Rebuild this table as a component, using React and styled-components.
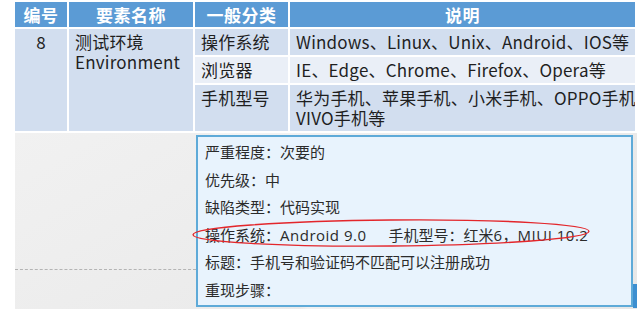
import React from 'react';
import styled, { createGlobalStyle } from 'styled-components';

const GlobalStyle = createGlobalStyle`
  html, body {
    margin: 0;
    padding: 0;
    background: #fff;
  }
  body {
    font-family: 'Noto Sans CJK SC', 'Noto Sans', sans-serif;
    color: #1f1f1f;
  }
`;

const Page = styled.div`
  width: 637px;
  height: 319px;
  padding: 2px 0 0 15px;
  box-sizing: border-box;
  overflow: hidden;
`;

const Table = styled.div`
  display: grid;
  grid-template-columns: 52px 124px 93px 345px;
  grid-template-rows: 25px 26px 26px 46px;
  gap: 2px;
  width: 620px;
`;

const Head = styled.div`
  background: #5b9bd5;
  color: #fff;
  font-weight: 700;
  font-size: 17px;
  display: flex;
  align-items: center;
  justify-content: center;
  letter-spacing: 0.5px;
`;

const Cell = styled.div`
  background: ${p => (p.$band ? '#eaeff7' : '#d2deef')};
  font-size: 17px;
  letter-spacing: 0.2px;
  line-height: 20px;
  padding: ${p => (p.$top ? '3px' : '0')} 6px 0;
  display: flex;
  flex-direction: column;
  justify-content: ${p => (p.$top ? 'flex-start' : 'center')};
  align-items: ${p => (p.$center ? 'center' : 'flex-start')};
  grid-row: ${p => p.$span || 'auto'};
  white-space: nowrap;
  overflow: hidden;
`;

const Lower = styled.div`
  display: flex;
  width: 622px;
  height: 176px;
  margin-top: 2px;
  padding-top: 2px;
  box-sizing: border-box;
  background:
    linear-gradient(62deg, rgba(255,255,255,0) 40%, rgba(255,255,255,0.35) 41%, rgba(255,255,255,0) 70%),
    linear-gradient(150deg, #f1f1f1 0%, #ebebeb 55%, #e7e7e7 100%);
`;

const Blank = styled.div`
  width: 181px;
  flex-shrink: 0;
`;

const Dotted = styled.div`
  margin-top: 134px;
  border-top: 1px dashed #b4b4b4;
`;

const Popup = styled.div`
  position: relative;
  width: 437px;
  height: 172px;
  box-sizing: border-box;
  border: 2px solid #5eaad8;
  background: #e8f3fd;
  padding: 2px 0 0 7px;
  font-family: 'Open Sans', 'Noto Sans CJK SC', sans-serif;
  font-size: 15px;
  line-height: 27.5px;
  color: #2b2b2b;
`;

const Line = styled.div`
  white-space: pre;
`;

const Latin = styled.span`
  letter-spacing: 0.5px;
`;

const Edge = styled.div`
  width: 4px;
  display: flex;
  flex-direction: column;
  justify-content: flex-end;
`;

const EdgeBar = styled.div`
  height: 24px;
  background: #3d8fd0;
  margin-bottom: 1px;
`;

const Mark = styled.svg`
  position: absolute;
  left: -6px;
  top: 81px;
  overflow: visible;
  pointer-events: none;
`;

const rows = [
  ['操作系统', ['Windows、Linux、Unix、Android、IOS等']],
  ['浏览器', ['IE、Edge、Chrome、Firefox、Opera等']],
  ['手机型号', ['华为手机、苹果手机、小米手机、OPPO手机', 'VIVO手机等']],
];

export default function App() {
  return (
    <>
      <GlobalStyle />
      <Page>
        <Table>
          <Head>编号</Head>
          <Head>要素名称</Head>
          <Head>一般分类</Head>
          <Head>说明</Head>
          <Cell $span="span 3" $top $center>8</Cell>
          <Cell $span="span 3" $top>
            <span>测试环境</span>
            <span>Environment</span>
          </Cell>
          {rows.map(([kind, desc], i) => (
            <React.Fragment key={kind}>
              <Cell $band={i === 1} $top={i === 2}>{kind}</Cell>
              <Cell $band={i === 1} $top={i === 2}>
                {desc.map(t => <span key={t}>{t}</span>)}
              </Cell>
            </React.Fragment>
          ))}
        </Table>
        <Lower>
          <Blank>
            <Dotted />
          </Blank>
          <Popup>
            <Line>严重程度：次要的</Line>
            <Line>优先级：中</Line>
            <Line>缺陷类型：代码实现</Line>
            <Line>
              操作系统：<Latin>Android 9.0     </Latin>手机型号：红米<Latin>6</Latin>，<Latin>MIUI 10.2</Latin>
            </Line>
            <Line>标题：手机号和验证码不匹配可以注册成功</Line>
            <Line>重现步骤：</Line>
            <Mark width="400" height="30">
              <ellipse cx="199" cy="15" rx="198" ry="13" fill="none" stroke="#e3262b" strokeWidth="1.4" transform="rotate(-0.5 199 15)" />
            </Mark>
          </Popup>
          <Edge>
            <EdgeBar />
          </Edge>
        </Lower>
      </Page>
    </>
  );
}
